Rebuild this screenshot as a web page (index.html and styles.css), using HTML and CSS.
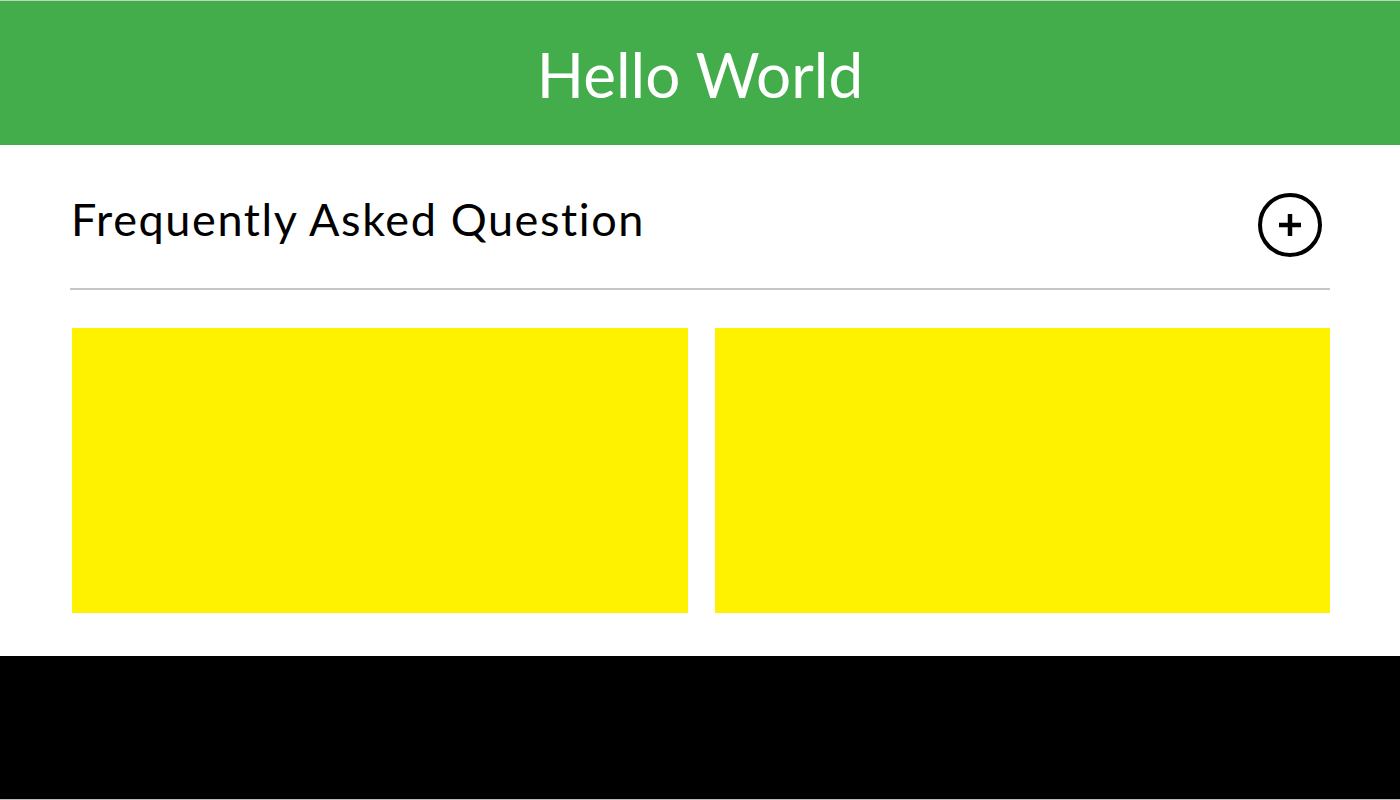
FILE: index.html
```html
<!DOCTYPE html>
<html>
<head>
<meta charset="utf-8">
<link rel="stylesheet" href="styles.css">
</head>
<body>
<header class="header">
  <h1 class="header-title">Hello World</h1>
</header>
<main class="main">
  <div class="faq-row">
    <h2 class="faq-title">Frequently Asked Question</h2>
    <button class="faq-toggle" aria-label="Expand">
      <svg width="68" height="68" viewBox="0 0 68 68">
        <circle cx="34" cy="34" r="30" fill="none" stroke="#000" stroke-width="4"/>
        <path d="M34 23v22M23 34h22" stroke="#000" stroke-width="4.5" stroke-linecap="butt"/>
      </svg>
    </button>
  </div>
  <div class="cards">
    <div class="card"></div>
    <div class="card"></div>
  </div>
</main>
<footer class="footer"></footer>
</body>
</html>
```
FILE: styles.css
```css
html, body {
  margin: 0;
  padding: 0;
  background: #fff;
}
body {
  font-family: Lato, "Liberation Sans", sans-serif;
  color: #000;
}
.header {
  background: #43ad4b;
  border-top: 1px solid #b9d9bb;
  height: 144px;
  display: flex;
  align-items: center;
  justify-content: center;
}
.header-title {
  margin: 0;
  color: #fff;
  font-weight: 400;
  font-size: 62px;
  line-height: 1;
  padding-top: 2px;
}
.main {
  padding: 0 70px;
}
.faq-row {
  border-bottom: 2px solid #c6c6c6;
  display: flex;
  align-items: flex-start;
  justify-content: space-between;
  box-sizing: border-box;
  height: 145px;
}
.faq-title {
  margin: 49px 0 0 1px;
  font-weight: 400;
  font-size: 45px;
  line-height: 50px;
  letter-spacing: 1.6px;
}
.faq-toggle {
  margin: 46px 6px 0 0;
  padding: 0;
  border: 0;
  background: none;
  width: 68px;
  height: 68px;
  display: block;
}
.faq-toggle svg {
  display: block;
}
.cards {
  display: grid;
  grid-template-columns: 1fr 1fr;
  gap: 27px;
  padding-left: 2px;
  margin-top: 38px;
}
.card {
  background: #fff200;
  height: 285px;
}
.footer {
  margin-top: 43px;
  background: #000;
  height: 143px;
  border-bottom: 1px solid #bbb;
}
```
